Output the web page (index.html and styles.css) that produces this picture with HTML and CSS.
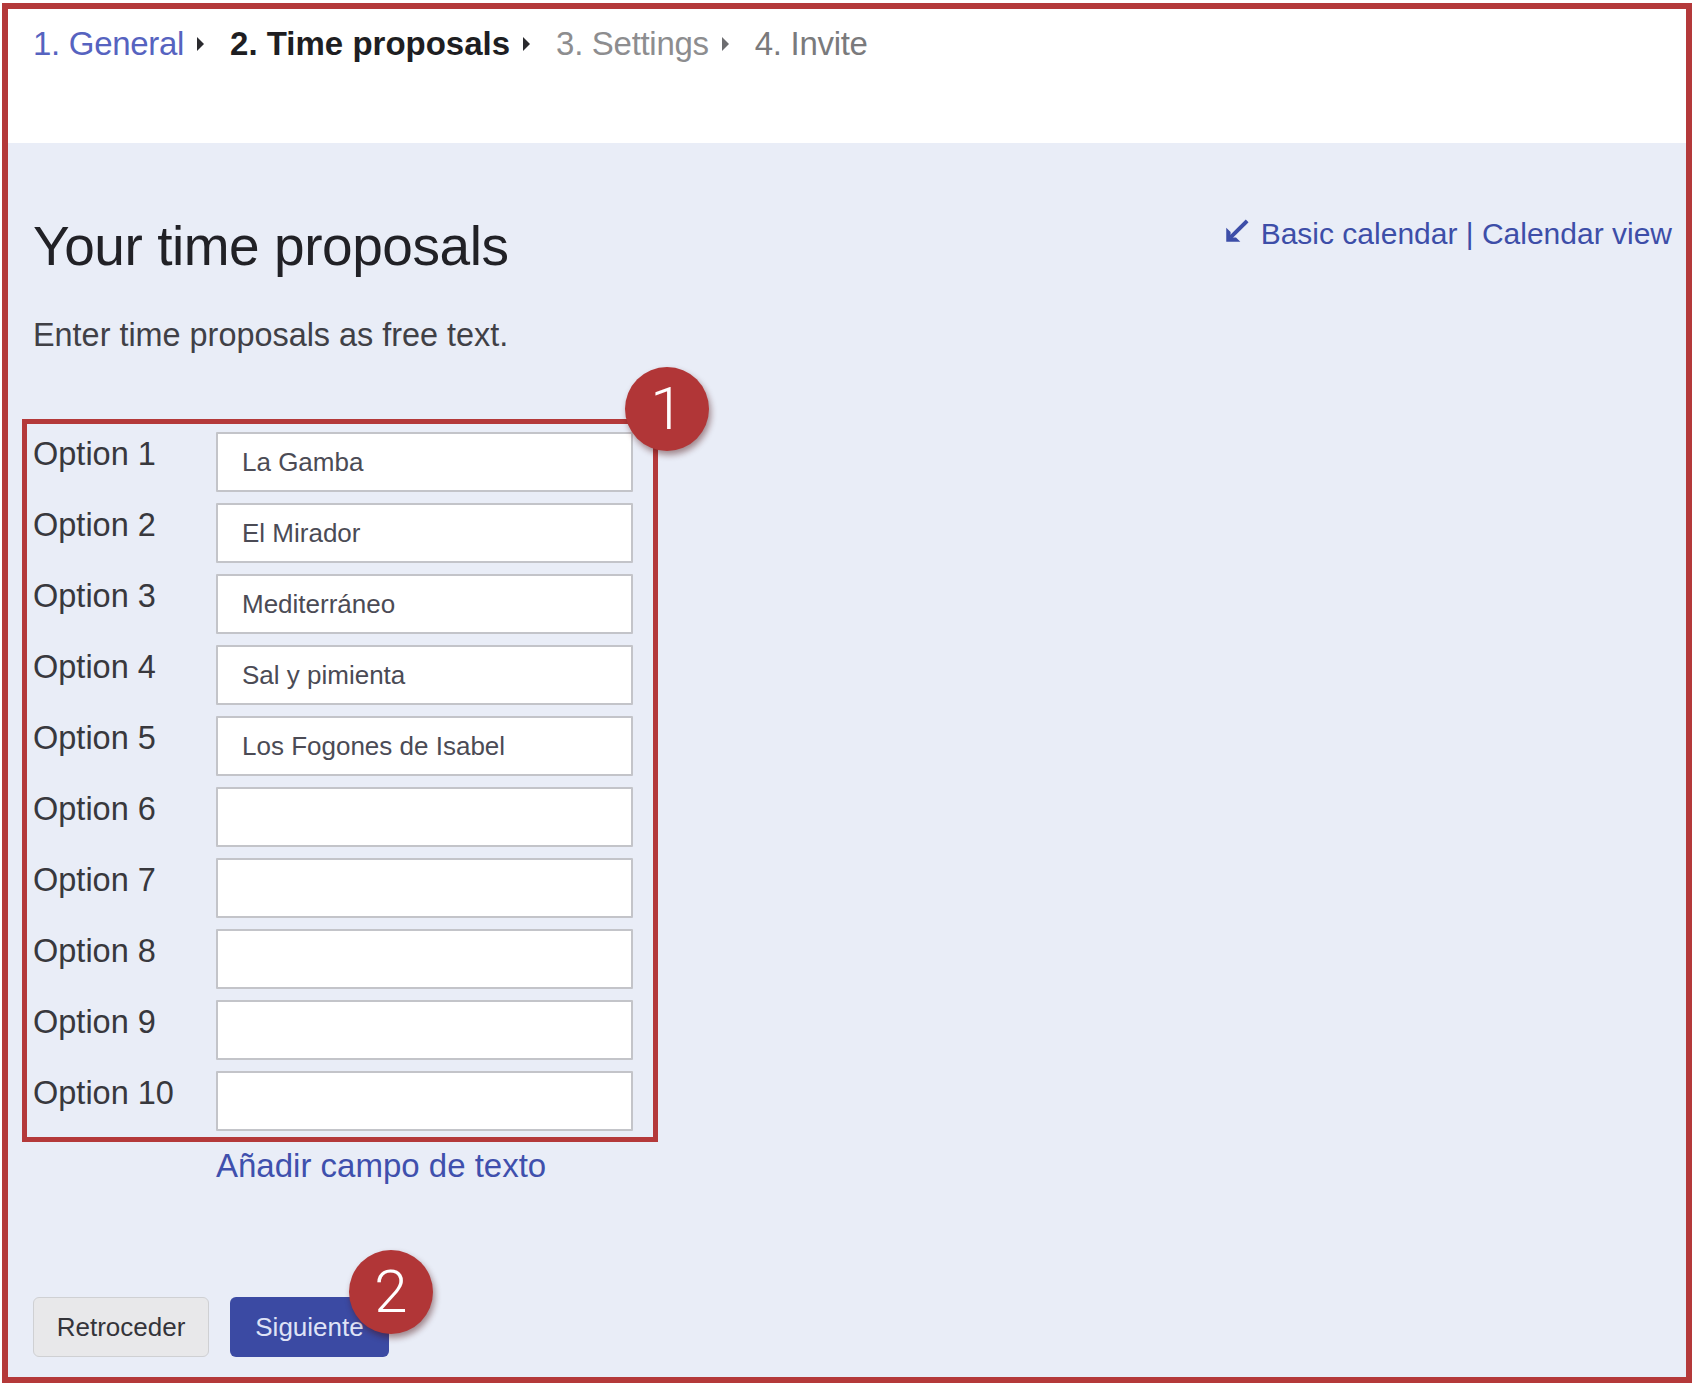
FILE: index.html
```html
<!DOCTYPE html>
<html lang="es">
<head>
<meta charset="utf-8">
<title>Your time proposals</title>
<link rel="stylesheet" href="styles.css">
</head>
<body>
<div class="frame">
  <header class="steps">
    <span class="step step-done">1. General</span><span class="tri"></span>
    <span class="step step-current">2. Time proposals</span><span class="tri"></span>
    <span class="step step-next">3. Settings</span><span class="tri tri-light"></span>
    <span class="step step-last">4. Invite</span>
  </header>
  <main class="content">
    <div class="title-row">
      <h1 class="title">Your time proposals</h1>
      <div class="views">
        <svg class="views-icon" width="26" height="26" viewBox="0 0 24 24"><path d="M21 3 L8 16" stroke="#3d4ea8" stroke-width="3.6" stroke-linecap="square" fill="none"/><polygon points="3,8 3,21 16,21 12,17 7,17 7,12" fill="#3d4ea8"/></svg>
        <a class="link" href="#">Basic calendar</a><span class="sep"> | </span><a class="link" href="#">Calendar view</a>
      </div>
    </div>
    <p class="intro">Enter time proposals as free text.</p>
    <div class="options">
      <span class="badge badge-one">1</span>
      <label class="opt-label">Option 1</label><input class="opt-input" type="text" value="La Gamba">
      <label class="opt-label">Option 2</label><input class="opt-input" type="text" value="El Mirador">
      <label class="opt-label">Option 3</label><input class="opt-input" type="text" value="Mediterráneo">
      <label class="opt-label">Option 4</label><input class="opt-input" type="text" value="Sal y pimienta">
      <label class="opt-label">Option 5</label><input class="opt-input" type="text" value="Los Fogones de Isabel">
      <label class="opt-label">Option 6</label><input class="opt-input" type="text" value="">
      <label class="opt-label">Option 7</label><input class="opt-input" type="text" value="">
      <label class="opt-label">Option 8</label><input class="opt-input" type="text" value="">
      <label class="opt-label">Option 9</label><input class="opt-input" type="text" value="">
      <label class="opt-label">Option 10</label><input class="opt-input" type="text" value="">
    </div>
    <a class="add-field" href="#">Añadir campo de texto</a>
    <div class="actions">
      <button class="btn btn-back" type="button">Retroceder</button>
      <button class="btn btn-next" type="button">Siguiente<span class="badge badge-two">2</span></button>
    </div>
  </main>
</div>
</body>
</html>
```
FILE: styles.css
```css
html, body {
  margin: 0;
  padding: 0;
  background: #ffffff;
}

body {
  font-family: "Liberation Sans", Arial, sans-serif;
}

.frame {
  margin: 3px 2px 0 2px;
  border: 6px solid #b4393a;
  height: 1368px;
  display: flex;
  flex-direction: column;
}

/* Steps header */
.steps {
  height: 134px;
  box-sizing: border-box;
  background: #ffffff;
  padding: 16px 0 0 25px;
  display: flex;
  align-items: flex-start;
  font-size: 33px;
  line-height: 38px;
}

.step {
  letter-spacing: -0.3px;
}

.step-done { color: #5663c0; }
.step-current { color: #1e1e22; font-weight: bold; letter-spacing: 0; }
.step-next { color: #8d8d8f; }
.step-last { color: #7a7a7c; }

.tri {
  width: 0;
  height: 0;
  margin: 12px 26px 0 13px;
  border-left: 7px solid #2a2a2e;
  border-top: 7px solid transparent;
  border-bottom: 7px solid transparent;
}

.tri-light {
  border-left-color: #6d6d70;
}

/* Main content */
.content {
  flex: 1;
  background: #e9edf7;
  padding: 0 14px 0 25px;
}

.title-row {
  margin-top: 71px;
  display: flex;
  justify-content: space-between;
  align-items: flex-start;
}

.title {
  margin: 0;
  font-size: 55px;
  line-height: 64px;
  font-weight: normal;
  color: #212126;
  letter-spacing: -0.45px;
}

.views {
  margin-top: 2px;
  display: flex;
  align-items: center;
  font-size: 30px;
  line-height: 36px;
  color: #3d4ea8;
}

.views-icon {
  margin-right: 12px;
  margin-top: -4px;
}

.link {
  color: #3d4ea8;
  text-decoration: none;
}

.sep {
  white-space: pre;
}

.intro {
  margin: 38px 0 0 0;
  font-size: 32.4px;
  line-height: 38px;
  color: #404046;
}

/* Options box */
.options {
  position: relative;
  margin: 65px 0 0 -11px;
  width: max-content;
  border: 5px solid #b4393a;
  padding: 8px 20px 6px 6px;
  display: grid;
  grid-template-columns: 183px 417px;
  row-gap: 11px;
}

.opt-label {
  font-size: 32.5px;
  line-height: 36px;
  padding-top: 4px;
  color: #38383d;
}

.opt-input {
  box-sizing: border-box;
  width: 417px;
  height: 60px;
  margin: 0;
  border: 2px solid #c3c4c9;
  border-radius: 1px;
  background: #ffffff;
  padding: 0 0 0 24px;
  font-family: "Liberation Sans", Arial, sans-serif;
  font-size: 26px;
  color: #4b4b55;
  outline: none;
}

.add-field {
  display: block;
  margin-top: 5px;
  padding-left: 183px;
  font-size: 33px;
  line-height: 38px;
  color: #3f50ad;
  text-decoration: none;
}

/* Buttons */
.actions {
  margin-top: 112px;
  display: flex;
  gap: 21px;
}

.btn {
  height: 60px;
  border-radius: 6px;
  font-family: "Liberation Sans", Arial, sans-serif;
  font-size: 26px;
  padding: 0;
  cursor: pointer;
}

.btn-back {
  width: 176px;
  background: #e8e8ea;
  border: 1px solid #cfd0d3;
  color: #34343a;
}

.btn-next {
  position: relative;
  width: 159px;
  background: #3b4aa3;
  border: none;
  color: #dfe3f6;
}

/* Callout badges */
.badge {
  position: absolute;
  z-index: 2;
  width: 84px;
  height: 84px;
  border-radius: 50%;
  background: #b13637;
  color: #ffffff;
  font-family: Roboto, "Liberation Sans", sans-serif;
  font-weight: 300;
  font-size: 60px;
  line-height: 84px;
  text-align: center;
  box-shadow: 2px 4px 6px rgba(70, 10, 10, 0.45);
}

.badge-one {
  left: 598px;
  top: -57px;
}

.badge-two {
  left: 119px;
  top: -47px;
}
```
